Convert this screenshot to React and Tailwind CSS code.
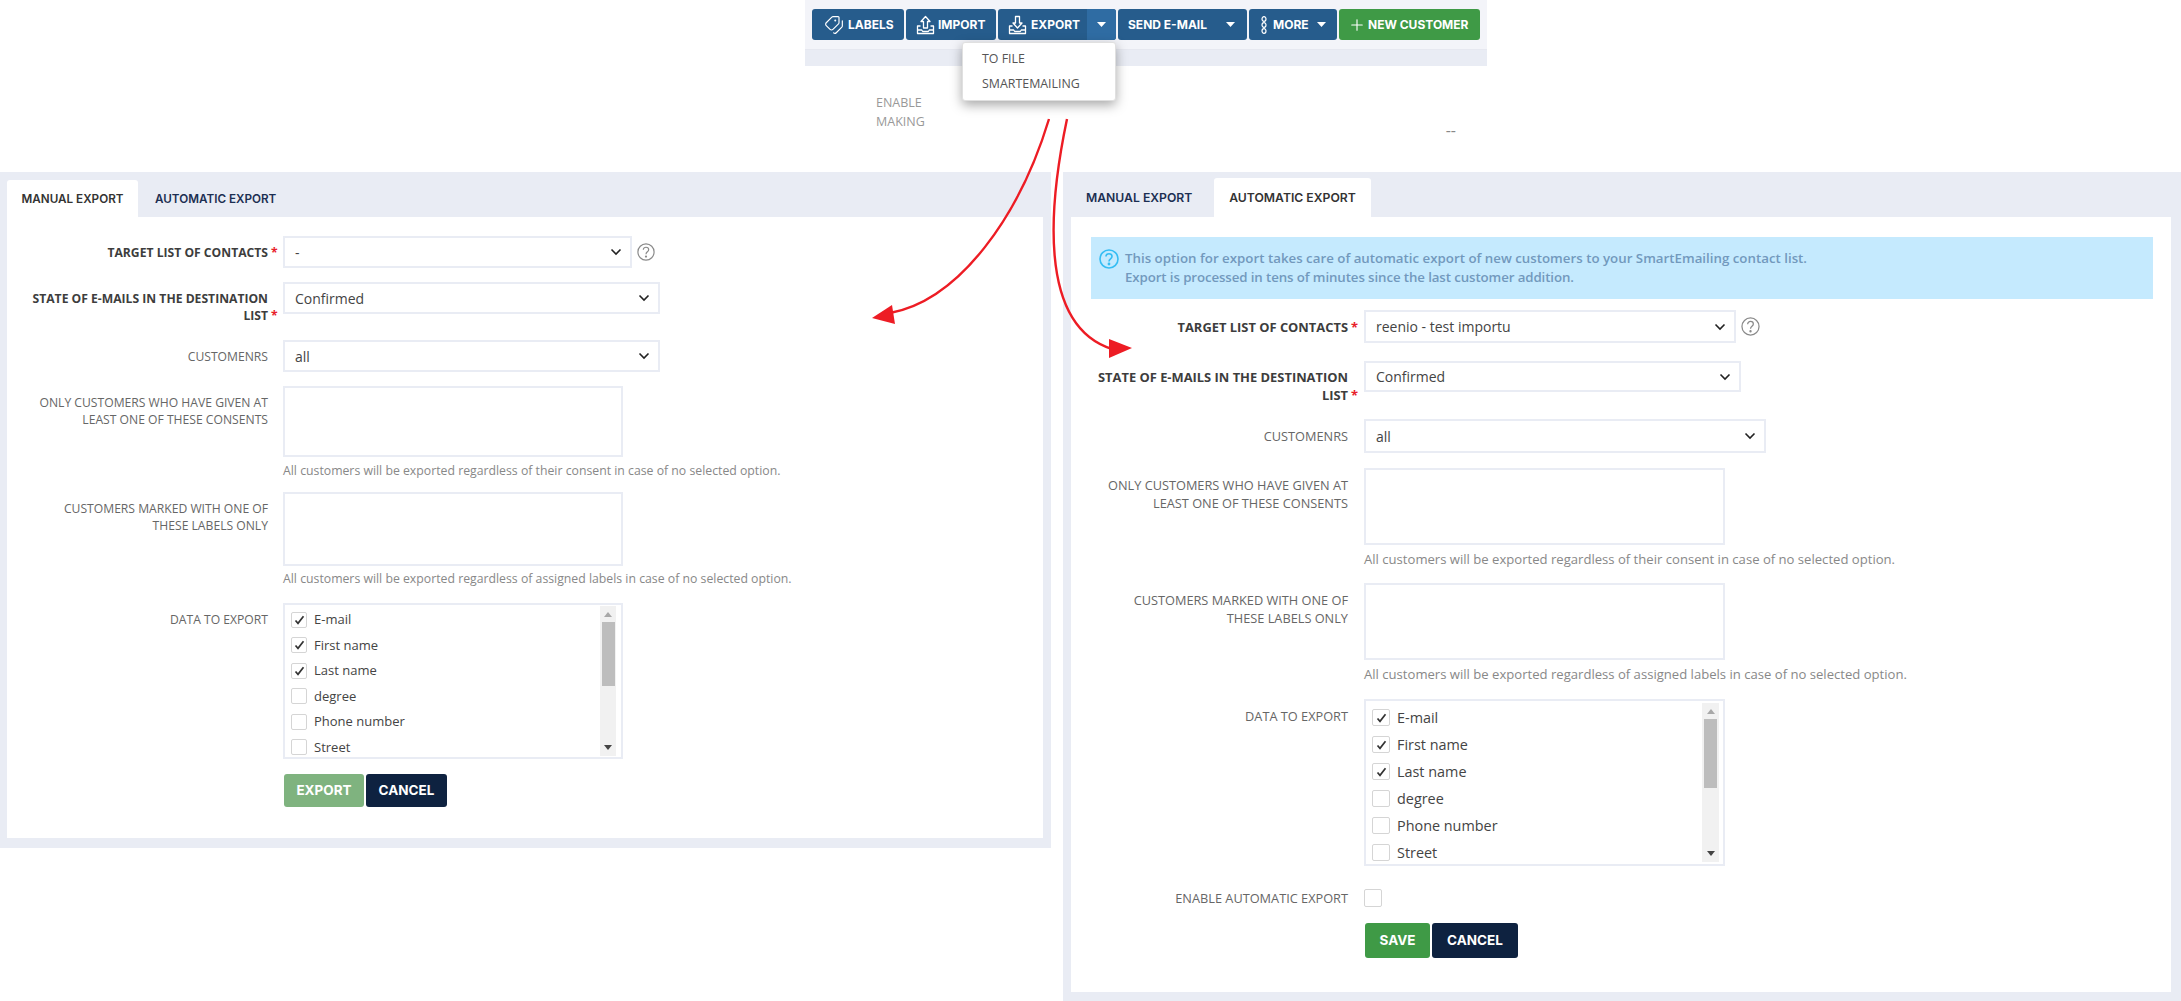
import React from "react";
import { Tags, Plus } from "lucide-react";

const sans = "font-['Open_Sans','Noto_Sans',sans-serif]";
const head = "font-['Inter','Noto_Sans',sans-serif]";

const Caret = ({ className = "" }) => (
  <svg width="9" height="5" viewBox="0 0 9 5" className={className}><path d="M0 0h9L4.5 5z" fill="#fff" /></svg>
);
const Chevron = () => (
  <svg width="12" height="8" viewBox="0 0 12 8" fill="none" stroke="#222" strokeWidth="1.6"><path d="M1.5 1.5 6 6l4.5-4.5" /></svg>
);
const Help = ({ size = 18, color = "#8a8a8a", sw = 1.3 }) => (
  <svg width={size} height={size} viewBox="0 0 20 20" fill="none" stroke={color} strokeWidth={sw}>
    <circle cx="10" cy="10" r="9" />
    <path d="M7 7.6c0-1.8 1.4-2.9 3-2.9s3 1 3 2.7c0 2.4-3 2.4-3 5" />
    <circle cx="10" cy="15" r=".6" fill={color} />
  </svg>
);
const TrayIcon = ({ up }) => (
  <svg width="19" height="20" viewBox="0 0 19 20" fill="none" stroke="#fff" strokeWidth="1.3" strokeLinejoin="round">
    <path d="M4.5 11H1.5v7.5h16V11h-3" />
    <path d="M1.5 15h4.2l1 1.5h5.6l1-1.5h4.2" />
    {up ? <path d="M9.5 1.5 14 6.5h-2.5V13h-4V6.5H5z" /> : <path d="M7.5 1.5h4V8H14l-4.5 5L5 8h2.5z" />}
  </svg>
);
const Chain = () => (
  <svg width="6" height="18" viewBox="0 0 6 18" fill="none" stroke="#fff" strokeWidth="1.2">
    <ellipse cx="3" cy="3" rx="2" ry="2.3" /><ellipse cx="3" cy="9" rx="2" ry="2.3" /><ellipse cx="3" cy="15" rx="2" ry="2.3" />
  </svg>
);

const Btn = ({ w, className = "bg-[#265c8c]", children }) => (
  <div className={`${w} ${className} ${head} h-[31px] rounded-[3px] flex items-center text-white text-[12px] font-bold whitespace-nowrap overflow-hidden`}>{children}</div>
);

const Star = () => <span className="inline-block w-0 whitespace-nowrap text-[#e8202a] relative left-[3px]">*</span>;

const S = {
  left: {
    labelW: "w-[261px] mr-[15px]",
    label: "text-[12.15px] leading-[17px]",
    boldLabel: "text-[12.15px] leading-[17px]",
    help: "text-[12.27px] leading-[17px]",
    item: "h-[25.5px] text-[13px]",
    box: "w-[16px] h-[16px]",
    gap: "gap-[7px]",
  },
  right: {
    labelW: "w-[277px] mr-[16px]",
    label: "text-[12.75px] leading-[18px]",
    boldLabel: "text-[12.9px] leading-[18px]",
    help: "text-[13.1px] leading-[18px]",
    item: "h-[27px] text-[14.4px]",
    box: "w-[18px] h-[17px]",
    gap: "gap-[7px]",
  },
};

const Row = ({ v, label, bold, star, top = "pt-[8px]", className = "", children }) => {
  const s = S[v];
  return (
    <div className={`flex items-start ${className}`}>
      <div className={`${s.labelW} ${bold ? s.boldLabel : s.label} ${top} shrink-0 text-right uppercase ${bold ? "font-bold text-[#3d3d3d]" : "text-[#666]"}`}>
        {label}{star && <Star />}
      </div>
      {children}
    </div>
  );
};

const Select = ({ w, h, value }) => (
  <div className={`${w} ${h} text-[14px] pl-[10px] pr-[8px] border-2 border-[#e9ecf4] bg-white flex items-center justify-between text-[#444] shrink-0`}>
    <span>{value}</span><Chevron />
  </div>
);
const Area = ({ w, h }) => <div className={`${w} ${h} border-2 border-[#e9ecf4] bg-white`} />;

const items = [["E-mail", 1], ["First name", 1], ["Last name", 1], ["degree", 0], ["Phone number", 0], ["Street", 0]];

const Checkbox = ({ className, on }) => (
  <div className={`${className} border border-[#d5d5d5] rounded-[2px] bg-white flex items-center justify-center shrink-0`}>
    {on ? <svg width="11" height="10" viewBox="0 0 11 10" fill="none" stroke="#333" strokeWidth="1.7"><path d="M1.5 5.5 4 8.3 9.5 1.2" /></svg> : null}
  </div>
);

const List = ({ v, w, h, thumb, pad }) => {
  const s = S[v];
  return (
    <div className={`${w} ${h} border-2 border-[#e9ecf4] bg-white flex overflow-hidden`}>
      <div className={`flex-1 ${pad}`}>
        {items.map(([t, on]) => (
          <div key={t} className={`${s.item} ${s.gap} flex items-center text-[#444]`}>
            <Checkbox className={s.box} on={on} /><span>{t}</span>
          </div>
        ))}
      </div>
      <div className={`${v === "left" ? "w-[16px] my-[1px] mr-[5px]" : "w-[17px] my-[2px] mr-[4px]"} bg-[#f1f1f1] flex flex-col items-center`}>
        <div className="h-[16px] flex items-center justify-center shrink-0">
          <svg width="8" height="5" viewBox="0 0 8 5"><path d="M4 0l4 5H0z" fill="#a8a8a8" /></svg>
        </div>
        <div className={`${thumb} w-[13px] bg-[#bdbdbd]`} />
        <div className="flex-1 flex items-end pb-[6px]">
          <svg width="8" height="5" viewBox="0 0 8 5"><path d="M0 0h8L4 5z" fill="#444" /></svg>
        </div>
      </div>
    </div>
  );
};

const ActionBtn = ({ w, h, className, children }) => (
  <div className={`${w} ${h} ${className} ${head} rounded-[3px] text-white text-[13.5px] font-bold flex items-center justify-center`}>{children}</div>
);

export default function App() {
  return (
    <div className={`relative w-[2181px] h-[1001px] bg-white overflow-hidden ${sans}`}>
      {/* top fragment */}
      <div className="h-[172px] pl-[805px]">
        <div className="w-[682px] relative">
          <div className="h-[50px] bg-[#f3f4f9] pt-[9px] pl-[7px] flex items-start gap-[2px] border-b border-[#e6e8f0]">
            <Btn w="w-[92px] pl-[12px] gap-[4px]"><Tags size={20} strokeWidth={1.4} className="-scale-x-100" />LABELS</Btn>
            <Btn w="w-[90px] pl-[10px] gap-[3px]"><TrayIcon up />IMPORT</Btn>
            <Btn w="w-[118px] h-[30px] pl-[10px] gap-[4px]">
              <TrayIcon />EXPORT
              <div className="ml-auto w-[29px] self-stretch bg-[#2f6ca3] flex items-center justify-center"><Caret /></div>
            </Btn>
            <Btn w="w-[129px] h-[30px] pl-[10px] pr-[12px] justify-between">SEND E-MAIL<Caret /></Btn>
            <Btn w="w-[88px] h-[30px] pl-[12px] pr-[11px] gap-[6px]"><Chain />MORE<Caret className="ml-auto" /></Btn>
            <Btn w="w-[141px] pl-[9px] gap-[2px]" className="bg-[#3f9a46]"><Plus size={18} strokeWidth={1.5} />NEW CUSTOMER</Btn>
          </div>
          <div className="h-[16px] bg-[#e9ecf4]" />
          <div className="flex justify-between pl-[71px] pr-[31px] pt-[28px]">
            <div className="text-[12.5px] leading-[18.5px] text-[#999] uppercase">Enable<br />Making</div>
            <div className="self-end text-[16px] leading-[10px] text-[#888] -mb-[4px]">--</div>
          </div>
          <div className="absolute left-[157px] top-[42px] w-[154px] h-[59px] bg-white rounded-[3px] border border-[#e0e0e0] shadow-[0_4px_12px_rgba(0,0,0,0.35)] py-[4px] pl-[19px] text-[12.4px] leading-[24.5px] text-[#555]">
            <div>TO FILE</div>
            <div>SMARTEMAILING</div>
          </div>
        </div>
      </div>

      <div className="flex items-start">
        {/* Left panel */}
        <div className="w-[1051px] bg-[#e9ecf4] pl-[7px] pr-[8px] pt-[8px] pb-[10px]">
          <div className={`flex h-[37px] ${head} text-[11.7px] font-semibold`}>
            <div className="w-[131px] pt-[2px] bg-white rounded-t-[3px] flex items-center justify-center text-[#333]">MANUAL EXPORT</div>
            <div className="pl-[17px] pt-[2px] flex items-center text-[#1c2f52]">AUTOMATIC EXPORT</div>
          </div>
          <div className="bg-white h-[621px] pt-[19px]">
            <Row v="left" label="Target list of contacts" bold star>
              <div className="flex items-center gap-[5px]">
                <Select w="w-[349px]" h="h-[32px]" value="-" />
                <Help />
              </div>
            </Row>
            <Row v="left" label={<>State of e-mails in the destination<br />list</>} bold star className="mt-[14px]" top="pt-[8px]">
              <Select w="w-[377px]" h="h-[32px]" value="Confirmed" />
            </Row>
            <Row v="left" label="Customenrs" className="mt-[16px]">
              <Select w="w-[377px]" h="h-[32px]" value="all" />
            </Row>
            <Row v="left" label={<>Only customers who have given at<br />least one of these consents</>} className="mt-[14px]">
              <Area w="w-[340px]" h="h-[71px]" />
            </Row>
            <div className={`ml-[276px] mt-[5px] ${S.left.help} text-[#888]`}>All customers will be exported regardless of their consent in case of no selected option.</div>
            <Row v="left" label={<>Customers marked with one of<br />these labels only</>} className="mt-[13px]">
              <Area w="w-[340px]" h="h-[74px]" />
            </Row>
            <div className={`ml-[276px] mt-[4px] ${S.left.help} text-[#888]`}>All customers will be exported regardless of assigned labels in case of no selected option.</div>
            <Row v="left" label="Data to export" className="mt-[16px]">
              <List v="left" w="w-[340px]" h="h-[156px]" thumb="h-[64px]" pad="pl-[6px] pt-[2px]" />
            </Row>
            <div className="ml-[277px] mt-[15px] flex gap-[2px]">
              <ActionBtn w="w-[80px]" h="h-[33px]" className="bg-[#7fb37f]">EXPORT</ActionBtn>
              <ActionBtn w="w-[81px]" h="h-[33px]" className="bg-[#0e2240]">CANCEL</ActionBtn>
            </div>
          </div>
        </div>

        {/* Right panel */}
        <div className="w-[1118px] ml-[12px] bg-[#e9ecf4] pl-[8px] pr-[10px] pt-[6px] pb-[9px]">
          <div className={`flex h-[39px] ${head} text-[12.2px] font-semibold`}>
            <div className="w-[143px] pl-[15px] pt-[1px] flex items-center text-[#1c2f52]">MANUAL EXPORT</div>
            <div className="w-[157px] pt-[1px] bg-white rounded-t-[3px] flex items-center justify-center text-[#333]">AUTOMATIC EXPORT</div>
          </div>
          <div className="bg-white h-[775px] pt-[20px]">
            <div className="ml-[20px] w-[1062px] h-[62px] bg-[#c5eafe] flex items-start pl-[8px] pt-[12px] gap-[6px] text-[13.3px] leading-[19px] font-semibold text-[#7299bd]">
              <Help size={20} color="#35bdf3" sw={1.6} />
              <div>This option for export takes care of automatic export of new customers to your SmartEmailing contact list.<br /><span className="tracking-[-0.11px]">Export is processed in tens of minutes since the last customer addition.</span></div>
            </div>
            <Row v="right" label="Target list of contacts" bold star className="mt-[11px]" top="pt-[8px]">
              <div className="flex items-center gap-[5px]">
                <Select w="w-[372px]" h="h-[33px]" value="reenio - test importu" />
                <Help size={19} />
              </div>
            </Row>
            <Row v="right" label={<>State of e-mails in the destination<br />list</>} bold star className="mt-[18px]" top="pt-[7px]">
              <Select w="w-[377px]" h="h-[31px]" value="Confirmed" />
            </Row>
            <Row v="right" label="Customenrs" className="mt-[15px]">
              <Select w="w-[402px]" h="h-[34px]" value="all" />
            </Row>
            <Row v="right" label={<>Only customers who have given at<br />least one of these consents</>} className="mt-[15px]">
              <Area w="w-[361px]" h="h-[77px]" />
            </Row>
            <div className={`ml-[293px] mt-[5px] ${S.right.help} text-[#888]`}>All customers will be exported regardless of their consent in case of no selected option.</div>
            <Row v="right" label={<>Customers marked with one of<br />these labels only</>} className="mt-[15px]">
              <Area w="w-[361px]" h="h-[77px]" />
            </Row>
            <div className={`ml-[293px] mt-[5px] ${S.right.help} text-[#888]`}>All customers will be exported regardless of assigned labels in case of no selected option.</div>
            <Row v="right" label="Data to export" className="mt-[16px]">
              <List v="right" w="w-[361px]" h="h-[167px]" thumb="h-[69px]" pad="pl-[6px] pt-[3px]" />
            </Row>
            <Row v="right" label="Enable automatic export" className="mt-[23px]" top="pt-[0px]">
              <Checkbox className="w-[18px] h-[18px]" />
            </Row>
            <div className="ml-[294px] mt-[16px] flex gap-[2px]">
              <ActionBtn w="w-[65px]" h="h-[35px]" className="bg-[#3f9a46]">SAVE</ActionBtn>
              <ActionBtn w="w-[86px]" h="h-[35px]" className="bg-[#0e2240]">CANCEL</ActionBtn>
            </div>
          </div>
        </div>
      </div>

      {/* annotation arrows over the screenshots */}
      <svg className="absolute inset-0 pointer-events-none" width="2181" height="1001" viewBox="0 0 2181 1001" fill="none">
        <path d="M1049 119C1020 215 960 300 890 313" stroke="#ed1c24" strokeWidth="2.4" />
        <path d="M872 318 892 305 895 324z" fill="#ed1c24" />
        <path d="M1067 119C1050 200 1036 325 1112 349" stroke="#ed1c24" strokeWidth="2.4" />
        <path d="M1132 348 1109 339 1109 358z" fill="#ed1c24" />
      </svg>
    </div>
  );
}
